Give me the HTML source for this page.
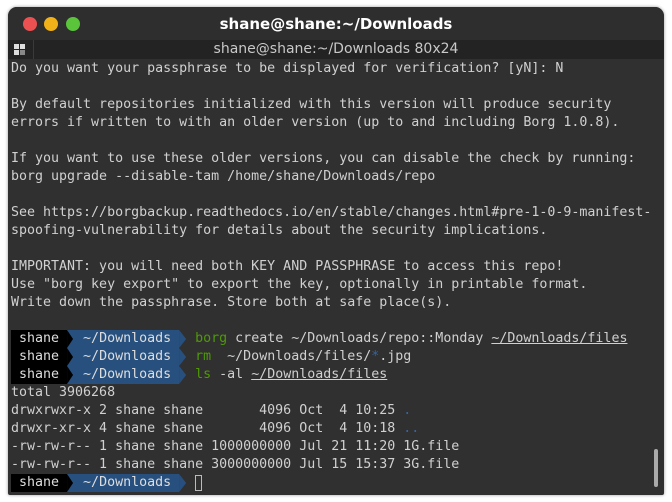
<!DOCTYPE html>
<html><head><style>
body{margin:0;background:#fff;width:672px;height:502px;overflow:hidden;}
.win{position:absolute;left:8px;top:7px;width:656px;height:488px;border-radius:9px 9px 2px 2px;background:#303030;overflow:hidden;box-shadow:0 0 3px rgba(0,0,0,.4);}
.title{position:absolute;left:0;top:0;width:656px;height:33px;background:#2e2e2e;color:#fff;font:bold 15px "DejaVu Sans","Liberation Sans",sans-serif;text-align:center;line-height:34px;}
.dot{position:absolute;top:10px;width:14px;height:14px;border-radius:50%;}
.tab{position:absolute;left:0;top:33px;width:656px;height:19px;background:#232323;color:#c8c8c8;font:14px "DejaVu Sans","Liberation Sans",sans-serif;text-align:center;line-height:19px;}
.term{position:absolute;left:3px;top:53px;font:13.3px/18px "DejaVu Sans Mono","Liberation Mono",monospace;color:#d0d0d0;}
.l{height:18px;position:relative;white-space:pre;}
.u{text-decoration:underline;}
.g{color:#4e9a06}.b{color:#3465a4}
.pk{background:#000;color:#ddd;display:inline-block;height:18px;}
.pb{background:#27507e;color:#ddd;display:inline-block;height:18px;}
.a1{display:inline-block;width:8px;height:18px;vertical-align:top;background:#27507e;position:relative;}
.a1:before{content:"";position:absolute;left:0;top:0;width:6px;height:18px;background:#000;clip-path:polygon(0 0,0 100%,100% 50%);}
.a2{display:inline-block;width:8px;height:18px;vertical-align:top;background:#303030;position:relative;}
.a2:before{content:"";position:absolute;left:0;top:0;width:7px;height:18px;background:#27507e;clip-path:polygon(0 0,0 100%,100% 50%);}
</style></head><body>
<div class="win">
<div class="title">shane@shane:~/Downloads
<div class="dot" style="left:15px;background:#ec5151"></div>
<div class="dot" style="left:36px;background:#f1b119"></div>
<div class="dot" style="left:58px;background:#5ac43a"></div>
</div>
<div class="tab"><span style="position:absolute;left:6px;top:4px;width:5px;height:5px;background:#ddd;box-shadow:6px 0 #ddd,0 6px #ddd,6px 6px #888"></span><span style="position:absolute;left:25px;top:0;width:1px;height:19px;background:#3a3a3a"></span>shane@shane:~/Downloads 80x24</div>
<div class="term"><div class="l">Do you want your passphrase to be displayed for verification? [yN]: N</div><div class="l"></div><div class="l">By default repositories initialized with this version will produce security</div><div class="l">errors if written to with an older version (up to and including Borg 1.0.8).</div><div class="l"></div><div class="l">If you want to use these older versions, you can disable the check by running:</div><div class="l">borg upgrade --disable-tam /home/shane/Downloads/repo</div><div class="l"></div><div class="l">See https://borgbackup.readthedocs.io/en/stable/changes.html#pre-1-0-9-manifest-</div><div class="l">spoofing-vulnerability for details about the security implications.</div><div class="l"></div><div class="l">IMPORTANT: you will need both KEY AND PASSPHRASE to access this repo!</div><div class="l">Use "borg key export" to export the key, optionally in printable format.</div><div class="l">Write down the passphrase. Store both at safe place(s).</div><div class="l"></div><div class="l"><span class="pk"> shane </span><span class="a1"></span><span class="pb"> ~/Downloads </span><span class="a2"></span> <span class="g">borg</span> create ~/Downloads/repo::Monday <span class="u">~/Downloads/files</span></div><div class="l"><span class="pk"> shane </span><span class="a1"></span><span class="pb"> ~/Downloads </span><span class="a2"></span> <span class="g">rm</span>  ~/Downloads/files/<span class="b">*</span>.jpg</div><div class="l"><span class="pk"> shane </span><span class="a1"></span><span class="pb"> ~/Downloads </span><span class="a2"></span> <span class="g">ls</span> -al <span class="u">~/Downloads/files</span></div><div class="l">total 3906268</div><div class="l">drwxrwxr-x 2 shane shane       4096 Oct  4 10:25 <span class="b">.</span></div><div class="l">drwxr-xr-x 4 shane shane       4096 Oct  4 10:18 <span class="b">..</span></div><div class="l">-rw-rw-r-- 1 shane shane 1000000000 Jul 21 11:20 1G.file</div><div class="l">-rw-rw-r-- 1 shane shane 3000000000 Jul 15 15:37 3G.file</div><div class="l"><span class="pk"> shane </span><span class="a1"></span><span class="pb"> ~/Downloads </span><span class="a2"></span> <span style="display:inline-block;width:7px;height:16px;border:1px solid #bbb;box-sizing:border-box;vertical-align:top;margin-top:1px"></span></div></div>
<div style="position:absolute;left:646px;top:442px;width:4px;height:38px;border-radius:2px;background:#aaa"></div>
</div>
</body></html>
